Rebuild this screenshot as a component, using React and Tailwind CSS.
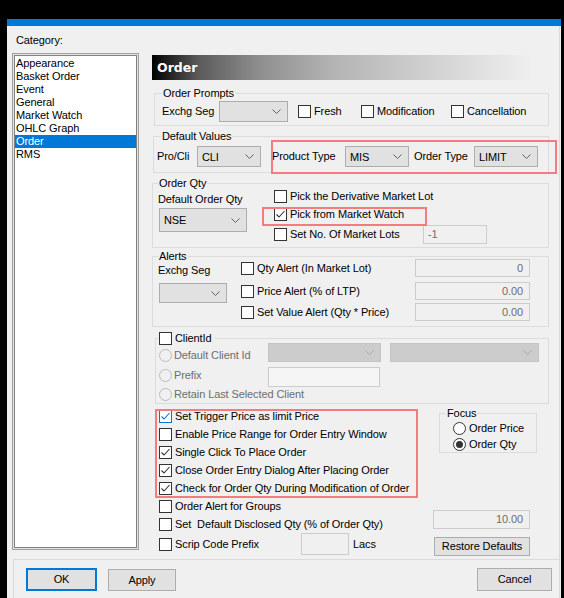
import React from 'react';

const categories = ['Appearance', 'Basket Order', 'Event', 'General', 'Market Watch', 'OHLC Graph', 'Order', 'RMS'];

function Box({ on, blue }) {
  const stroke = blue ? '#0078d7' : '#333333';
  return (
    <span
      className={`w-[13px] h-[13px] shrink-0 border bg-white flex items-center justify-center ${
        blue ? 'border-[#0078d7]' : 'border-[#333333]'
      }`}
    >
      {on && (
        <svg width="11" height="11" viewBox="0 0 11 11">
          <path d="M1.5 5.5 L4 8 L9.5 2" fill="none" stroke={stroke} strokeWidth="1.1" />
        </svg>
      )}
    </span>
  );
}

function CheckRow({ on, blue, label, className = '' }) {
  return (
    <div className={`flex items-center ${className}`}>
      <Box on={on} blue={blue} />
      <span className="ml-[3px] whitespace-pre">{label}</span>
    </div>
  );
}

function Radio({ on, disabled }) {
  return (
    <span
      className={`w-[13px] h-[13px] shrink-0 rounded-full border flex items-center justify-center ${
        disabled ? 'border-[#bcbcbc] bg-[#f0f0f0]' : 'border-[#333333] bg-white'
      }`}
    >
      {on && <span className="w-[7px] h-[7px] rounded-full bg-[#333333]" />}
    </span>
  );
}

function Combo({ className = '', value, disabled }) {
  return (
    <div
      className={`flex items-center border ${
        disabled ? 'border-[#c4c4c4] bg-[#cccccc]' : 'border-[#adadad] bg-[#e1e1e1]'
      } ${className}`}
    >
      <span className="flex-1 pl-[4px] pt-[1px]">{value}</span>
      <svg width="9" height="5" viewBox="0 0 9 5" className="mr-[6px]">
        <path d="M0.5 0.5 L4.5 4.5 L8.5 0.5" fill="none" stroke={disabled ? '#a8a8a8' : '#606060'} strokeWidth="1" />
      </svg>
    </div>
  );
}

function Field({ className = '', value, right }) {
  return (
    <div
      className={`flex items-center border border-[#cccccc] bg-[#f0f0f0] text-[#6d6d6d] ${
        right ? 'justify-end pr-[6px]' : 'pl-[4px]'
      } ${className}`}
    >
      {value}
    </div>
  );
}

function Button({ children, className = '' }) {
  return (
    <div className={`flex items-center justify-center bg-[#e1e1e1] ${className}`}>{children}</div>
  );
}

export default function App() {
  return (
    <div className="w-[564px] h-[598px] bg-black overflow-hidden font-['Liberation_Sans',Arial,sans-serif] text-[11px] leading-[13px] tracking-[-0.1px] text-black">
      <div className="h-[19px]" />
      <div className="ml-[7px] w-[554px] h-[579px] bg-[#f0f0f0] flex flex-col">
        <div className="h-[7px] bg-[#0078d7]" />
        <div className="w-[553px] flex-1 flex flex-col border-r border-[#dadada]">
          <div className="pl-[9px] pt-[8px] h-[21px]">Category:</div>

          <div className="flex h-[512px]">
            {/* category list */}
            <div className="mt-[6px] ml-[5px] w-[127px] h-[497px] border border-[#a0a0a0] bg-[#e3e3e3] p-[1px]">
              <div className="h-full border border-[#828282] bg-white pt-[1px]">
                {categories.map((c) => (
                  <div
                    key={c}
                    className={`h-[13px] pl-[1px] ${c === 'Order' ? 'bg-[#0078d7] text-white' : ''}`}
                  >
                    {c}
                  </div>
                ))}
              </div>
            </div>

            {/* order page */}
            <div className="relative ml-[9px] w-[409px] flex flex-col">
              <div className="mt-[8px] ml-[4px] w-[382px] h-[25px] flex items-center pl-[5px] bg-[linear-gradient(to_right,#000000_0%,#5a5a5a_12%,#8e8e8e_28%,#b4b4b4_48%,#cbcbcb_68%,#f0f0f0_100%)]">
                <span className="font-['DejaVu_Sans',sans-serif] font-bold text-[12.5px] tracking-normal text-white">Order</span>
              </div>

              <fieldset className="ml-[6px] mt-[7px] w-[395px] border border-[#dcdcdc] pl-[7px] pb-[3px]">
                <legend className="px-[1px]">Order Prompts</legend>
                <div className="flex items-center h-[22px]">
                  <span className="w-[57px]">Exchg Seg</span>
                  <Combo className="w-[69px] h-[21px]" />
                  <CheckRow className="ml-[10px] w-[63px]" label="Fresh" />
                  <CheckRow className="w-[90px]" label="Modification" />
                  <CheckRow label="Cancellation" />
                </div>
              </fieldset>

              <fieldset className="ml-[5px] mt-[4px] w-[396px] border border-[#dcdcdc] pl-[3px] pt-[3px] pb-[5px]">
                <legend className="ml-[4px] px-[1px]">Default Values</legend>
                <div className="flex items-center h-[21px]">
                  <span className="w-[40px]">Pro/Cli</span>
                  <Combo className="w-[64px] h-[21px]" value="CLI" />
                  <span className="ml-[11px] w-[73px] whitespace-nowrap">Product Type</span>
                  <Combo className="w-[64px] h-[21px]" value="MIS" />
                  <span className="ml-[5px] w-[60px] whitespace-nowrap">Order Type</span>
                  <Combo className="w-[64px] h-[21px]" value="LIMIT" />
                </div>
              </fieldset>

              <fieldset className="ml-[4px] mt-[4px] w-[397px] border border-[#dcdcdc] pl-[5px] pb-[3px]">
                <legend className="px-[1px]">Order Qty</legend>
                <div className="flex">
                  <div className="w-[116px] flex flex-col">
                    <span className="mt-[3px]">Default Order Qty</span>
                    <Combo className="mt-[2px] ml-[1px] w-[88px] h-[24px]" value="NSE" />
                  </div>
                  <div className="flex flex-col">
                    <CheckRow className="h-[13px]" label="Pick the Derivative Market Lot" />
                    <CheckRow className="mt-[5px] h-[13px]" on label="Pick from Market Watch" />
                    <div className="mt-[4px] h-[19px] flex items-center">
                      <CheckRow className="w-[149px]" label="Set No. Of Market Lots" />
                      <Field className="w-[64px] h-[19px]" value="-1" />
                    </div>
                  </div>
                </div>
              </fieldset>

              <fieldset className="ml-[4px] mt-[2px] w-[397px] border border-[#dcdcdc] pl-[5px] pb-[5px]">
                <legend className="px-[1px]">Alerts</legend>
                <div className="flex -mt-[4px]">
                  <div className="w-[83px] flex flex-col">
                    <span className="mt-[5px]">Exchg Seg</span>
                    <Combo className="mt-[6px] ml-[1px] w-[68px] h-[20px]" />
                  </div>
                  <div className="flex flex-col">
                    <div className="h-[18px] flex items-center">
                      <CheckRow className="w-[174px]" label="Qty Alert (In Market Lot)" />
                      <Field className="w-[115px] h-[18px]" value="0" right />
                    </div>
                    <div className="mt-[5px] h-[18px] flex items-center">
                      <CheckRow className="w-[174px]" label="Price Alert (% of LTP)" />
                      <Field className="w-[115px] h-[18px]" value="0.00" right />
                    </div>
                    <div className="mt-[3px] h-[18px] flex items-center">
                      <CheckRow className="w-[174px]" label="Set Value Alert (Qty * Price)" />
                      <Field className="w-[115px] h-[18px]" value="0.00" right />
                    </div>
                  </div>
                </div>
              </fieldset>

              <fieldset className="ml-[7px] mt-[5px] w-[394px] border border-[#dcdcdc] pl-[3px] pb-[2px]">
                <legend className="pr-[3px]">
                  <CheckRow label="ClientId" />
                </legend>
                <div className="-mt-[2px] flex flex-col text-[#6d6d6d]">
                  <div className="h-[19px] flex items-start">
                    <div className="mt-[6px] w-[109px] flex items-center">
                      <Radio disabled />
                      <span className="ml-[2px]">Default Client Id</span>
                    </div>
                    <Combo className="w-[113px] h-[19px]" disabled />
                    <Combo className="ml-[9px] w-[149px] h-[19px]" disabled />
                  </div>
                  <div className="mt-[5px] h-[20px] flex items-start">
                    <div className="mt-[2px] w-[109px] flex items-center">
                      <Radio disabled />
                      <span className="ml-[2px]">Prefix</span>
                    </div>
                    <div className="w-[112px] h-[20px] border border-[#cccccc] bg-[#f5f5f5]" />
                  </div>
                  <div className="mt-[1px] h-[13px] flex items-center">
                    <Radio disabled />
                    <span className="ml-[2px]">Retain Last Selected Client</span>
                  </div>
                </div>
              </fieldset>

              <div className="flex">
                <div className="ml-[11px] mt-[3px] w-[274px] flex flex-col">
                  <CheckRow className="h-[18px]" on blue label="Set Trigger Price as limit Price" />
                  <CheckRow className="h-[18px]" label="Enable Price Range for Order Entry Window" />
                  <CheckRow className="h-[18px]" on label="Single Click To Place Order" />
                  <CheckRow className="h-[18px]" on label="Close Order Entry Dialog After Placing Order" />
                  <CheckRow className="h-[18px]" on label="Check for Order Qty During Modification of Order" />
                  <CheckRow className="h-[18px]" label="Order Alert for Groups" />
                  <CheckRow className="h-[18px]" label="Set  Default Disclosed Qty (% of Order Qty)" />
                  <div className="h-[22px] flex items-center">
                    <CheckRow className="w-[142px]" label="Scrip Code Prefix" />
                    <div className="w-[48px] h-[22px] border border-[#cccccc] bg-[#f0f0f0]" />
                    <span className="ml-[4px]">Lacs</span>
                  </div>
                </div>
                <div className="mt-[3px] flex flex-col">
                  <fieldset className="ml-[6px] w-[98px] border border-[#dcdcdc] pl-[6px]">
                    <legend className="px-[1px]">Focus</legend>
                    <div className="pl-[7px]">
                      <div className="h-[16px] flex items-center">
                        <Radio />
                        <span className="ml-[3px]">Order Price</span>
                      </div>
                      <div className="h-[16px] flex items-center">
                        <Radio on />
                        <span className="ml-[3px]">Order Qty</span>
                      </div>
                    </div>
                  </fieldset>
                  <Field className="mt-[57px] w-[97px] h-[19px]" value="10.00" right />
                  <Button className="mt-[8px] ml-[1px] w-[96px] h-[19px] border border-[#adadad]">Restore Defaults</Button>
                </div>
              </div>

              {/* highlight marks */}
              <div className="absolute left-[123px] top-[93px] w-[286px] h-[34px] border-2 border-[#f47c7c]" />
              <div className="absolute left-[114px] top-[160px] w-[165px] h-[19px] border-2 border-[#f47c7c]" />
              <div className="absolute left-[7px] top-[362px] w-[263px] h-[89px] border-2 border-[#f47c7c]" />
            </div>
          </div>

          <div className="ml-[6px] flex-1 border-t border-l border-[#dadada] flex items-start pt-[8px] pl-[12px] pr-[7px]">
            <Button className="w-[71px] h-[23px] border-2 border-[#0078d7]">OK</Button>
            <Button className="ml-[11px] mt-[1px] w-[68px] h-[22px] border border-[#adadad]">Apply</Button>
            <Button className="ml-auto w-[75px] h-[23px] border border-[#adadad]">Cancel</Button>
          </div>
        </div>
      </div>
    </div>
  );
}
